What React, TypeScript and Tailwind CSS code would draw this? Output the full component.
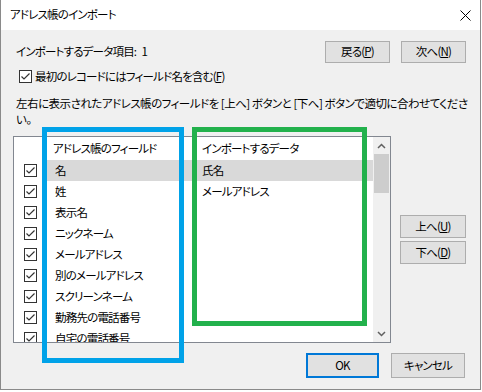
import React from "react";

const F = "[font-family:'Noto_Sans_CJK_JP',sans-serif] [font-feature-settings:'palt'] tracking-[-0.8px]";

function Btn({ children, w = "w-[65px]", h = "h-[22px]", primary = false }: { children: React.ReactNode; w?: string; h?: string; primary?: boolean }) {
  return (
    <div
      className={`${w} ${h} flex items-center justify-center bg-[#e1e1e1] text-[11.5px] text-black ${
        primary ? "border-2 border-[#0078d7]" : "border border-[#adadad]"
      }`}
    >
      {children}
    </div>
  );
}

function Check() {
  return (
    <div className="w-[13px] h-[13px] border border-[#333333] bg-white flex items-center justify-center">
      <svg width="11" height="11" viewBox="0 0 11 11">
        <path d="M1.5 5.5 L4 8 L9.5 2.5" fill="none" stroke="#333333" strokeWidth="1.2" />
      </svg>
    </div>
  );
}

const col1 = ["名", "姓", "表示名", "ニックネーム", "メールアドレス", "別のメールアドレス", "スクリーンネーム", "勤務先の電話番号", "自宅の電話番号"];
const col2 = ["氏名", "メールアドレス"];

export default function App() {
  return (
    <div className={`w-[482px] h-[392px] bg-white relative ${F} text-black`}>
      <div className="w-[481px] h-[390px] border-l border-r border-b border-[#8a8a8a] flex flex-col">
        {/* title bar */}
        <div className="h-[30px] bg-white flex items-center justify-between pl-[9px] pr-[10px]">
          <span className="text-[11.5px]">アドレス帳のインポート</span>
          <svg width="11" height="11" viewBox="0 0 11 11" className="mr-[-1px]">
            <path d="M0.5 0.5 L10.5 10.5 M10.5 0.5 L0.5 10.5" stroke="#000" strokeWidth="1" />
          </svg>
        </div>
        {/* body */}
        <div className="flex-1 bg-[#f0f0f0] pl-[12px] pr-[14px] pt-[11px] flex flex-col">
          <div className="flex items-center h-[22px]">
            <span className="ml-[3px] text-[11.5px] flex-1">インポートするデータ項目:&nbsp;&nbsp;&nbsp;1</span>
            <Btn>
              戻る(<span className="underline">P</span>)
            </Btn>
            <div className="w-[11px]" />
            <Btn>
              次へ(<span className="underline">N</span>)
            </Btn>
          </div>
          <div className="flex items-center mt-[7px] h-[13px] ml-[6px]">
            <Check />
            <span className="ml-[3px] text-[11.5px]">
              最初のレコードにはフィールド名を含む(<span className="underline">F</span>)
            </span>
          </div>
          <div className="mt-[12px] ml-[3px] w-[452px] text-[11.5px] leading-[16px] whitespace-nowrap tracking-[-0.5px]">
            左右に表示されたアドレス帳のフィールドを&nbsp;[上へ]&nbsp;ボタンと&nbsp;[下へ]&nbsp;ボタンで適切に合わせてくださ
            <br />
            い。
          </div>
          <div className="flex mt-[9px]">
            {/* list */}
            <div className="w-[378px] h-[207px] border border-[#828790] bg-white flex overflow-hidden">
              <div className="flex-1 flex flex-col overflow-hidden">
                <div className="h-[23px] flex items-center text-[11.5px] shrink-0">
                  <div className="w-[32px]" />
                  <div className="w-[149px] pl-[7px]">アドレス帳のフィールド</div>
                  <div className="pl-[7px]">インポートするデータ</div>
                </div>
                {col1.map((t, i) => (
                  <div key={t} className="h-[21px] flex items-center text-[11.5px] shrink-0">
                    <div className="w-[32px] flex justify-center pl-[1px]">
                      <Check />
                    </div>
                    <div className={`flex-1 h-full flex items-center ${i === 0 ? "bg-[#d9d9d9]" : ""}`}>
                      <div className="w-[149px] pl-[9px]">{t}</div>
                      <div className="pl-[7px]">{col2[i] ?? ""}</div>
                    </div>
                  </div>
                ))}
              </div>
              <div className="w-[17px] bg-[#f0f0f0] flex flex-col items-center">
                <div className="h-[17px] flex items-center justify-center">
                  <svg width="9" height="6" viewBox="0 0 9 6">
                    <path d="M1 5 L4.5 1.5 L8 5" fill="none" stroke="#606060" strokeWidth="1.5" />
                  </svg>
                </div>
                <div className="w-[15px] h-[39px] bg-[#cdcdcd]" />
                <div className="flex-1" />
                <div className="h-[17px] flex items-center justify-center">
                  <svg width="9" height="6" viewBox="0 0 9 6">
                    <path d="M1 1 L4.5 4.5 L8 1" fill="none" stroke="#606060" strokeWidth="1.5" />
                  </svg>
                </div>
              </div>
            </div>
            <div className="ml-[9px] pt-[79px] flex flex-col gap-[3px]">
              <Btn w="w-[66px]" h="h-[23px]">
                上へ(<span className="underline">U</span>)
              </Btn>
              <Btn w="w-[66px]" h="h-[23px]">
                下へ(<span className="underline">D</span>)
              </Btn>
            </div>
          </div>
          <div className="flex justify-end mt-[10px] pr-[1px]">
            <Btn w="w-[73px]" h="h-[25px]" primary>
              OK
            </Btn>
            <div className="w-[12px]" />
            <Btn w="w-[74px]" h="h-[25px]">
              キャンセル
            </Btn>
          </div>
        </div>
      </div>
      {/* annotation rectangles */}
      <div className="absolute left-[42px] top-[127px] w-[142px] h-[236px] border-[5px] border-[#00a2e8]" />
      <div className="absolute left-[192px] top-[127px] w-[175px] h-[199px] border-[5px] border-[#22b14c]" />
    </div>
  );
}
